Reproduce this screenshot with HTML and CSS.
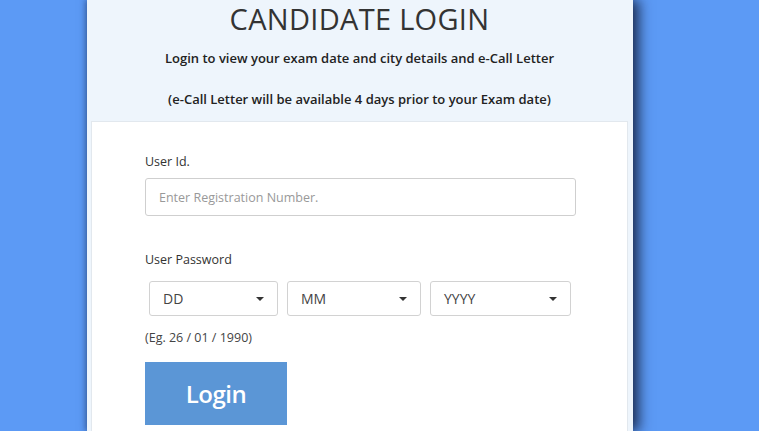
FILE: index.html
```html
<!DOCTYPE html>
<html>

<head>
    <meta charset="UTF-8">
    <title>Candidate Login</title>
    <link rel="stylesheet" href="styles.css">
</head>

<body>
    <div class="page">
        <div class="panel">
            <h1 class="title">CANDIDATE LOGIN</h1>
            <p class="intro">Login to view your exam date and city details and e-Call Letter</p>
            <p class="intro note">(e-Call Letter will be available 4 days prior to your Exam date)</p>
            <!-- 登录表单 -->
            <div class="card">
                <label class="label" for="userid">User Id.</label>
                <input class="field" id="userid" type="text" placeholder="Enter Registration Number.">

                <div class="label pwd">User Password</div>
                <div class="selects">
                    <div class="select dd"><span>DD</span><i class="caret"></i></div>
                    <div class="select mm"><span>MM</span><i class="caret"></i></div>
                    <div class="select yy"><span>YYYY</span><i class="caret"></i></div>
                </div>
                <div class="hint">(Eg. 26 / 01 / 1990)</div>
                <button class="login">Login</button>
            </div>
        </div>
    </div>
</body>

</html>
```

FILE: styles.css
```css
html,
body {
    margin: 0;
    height: 100%;
    overflow: hidden;
}

body {
    background-color: #5c9af5;
    font-family: "Open Sans", "Liberation Sans", sans-serif;
    color: #333;
}

.page {
    padding-left: 87px;
}

.panel {
    width: 546px;
    height: 100vh;
    overflow: hidden;
    box-sizing: border-box;
    padding: 0 5px 0 4px;
    background-color: #eef5fc;
    box-shadow: 6px 0 12px rgba(20, 30, 60, 0.85), -2px 0 5px rgba(20, 40, 90, 0.35);
}

.title {
    margin: 0;
    padding-top: 1px;
    font-size: 29px;
    font-weight: 400;
    line-height: 36px;
    text-align: center;
    color: #333;
    letter-spacing: 0.3px;
}

.intro {
    margin: 11px 0 0;
    font-size: 13px;
    font-weight: 600;
    line-height: 20px;
    text-align: center;
    color: #222;
}

.note {
    margin-top: 21px;
}

.card {
    margin-top: 12px;
    height: 340px;
    background-color: white;
    border: 1px solid #e2e8ee;
    border-bottom: none;
    padding: 31px 52px 0 53px;
}

.label {
    display: block;
    font-size: 12.5px;
    line-height: 18px;
    color: #333;
}

.field {
    display: block;
    width: 431px;
    height: 38px;
    box-sizing: border-box;
    margin-top: 7px;
    padding: 0 13px;
    border: 1px solid #cfcfcf;
    border-radius: 3px;
    font-family: inherit;
    font-size: 12.5px;
    color: #333;
    outline: none;
}

.field::placeholder {
    color: #999;
}

.pwd {
    margin-top: 35px;
}

.selects {
    display: flex;
    gap: 9px;
    margin: 12px 0 0 4px;
}

.select {
    height: 35px;
    box-sizing: border-box;
    border: 1px solid #d2d2d2;
    border-radius: 3px;
    display: flex;
    align-items: center;
    justify-content: space-between;
    padding: 0 13px 0 13px;
    font-size: 14px;
    color: #444;
}

.dd {
    width: 129px;
}

.mm {
    width: 134px;
}

.yy {
    width: 141px;
}

.caret {
    width: 0;
    height: 0;
    border-left: 4px solid transparent;
    border-right: 4px solid transparent;
    border-top: 4px solid #333;
}

.hint {
    margin-top: 13px;
    font-size: 12.5px;
    line-height: 18px;
    color: #444;
}

.login {
    display: block;
    margin-top: 15px;
    width: 142px;
    height: 63px;
    border: none;
    background-color: #5b96d6;
    color: white;
    font-family: inherit;
    font-size: 24px;
    font-weight: 600;
    letter-spacing: -0.5px;
    padding: 0;
}
```
